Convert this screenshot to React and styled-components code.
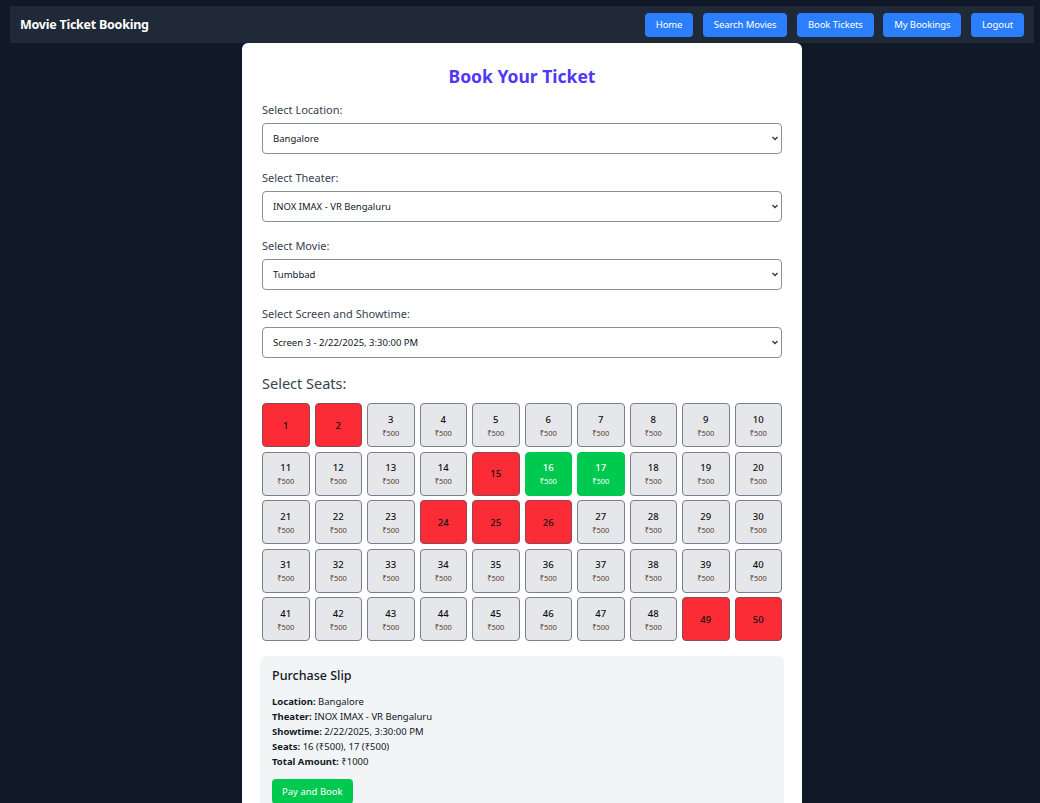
import React, { useState } from "react";
import styled, { createGlobalStyle } from "styled-components";

const GlobalStyle = createGlobalStyle`
  * { box-sizing: border-box; }
  body {
    margin: 0;
    background-color: #111827;
    font-family: "Noto Sans", "Open Sans", Arial, sans-serif;
  }
`;

// 페이지 전체
const Page = styled.div`
  min-height: 100vh;
  padding: 6px 6px 0 10px;
`;

// 상단 네비게이션
const Navbar = styled.nav`
  display: flex;
  justify-content: space-between;
  align-items: center;
  height: 37px;
  padding: 0 10px;
  background-color: #1f2937;
`;

const Brand = styled.div`
  color: white;
  font-weight: 700;
  font-size: 12.5px;
  letter-spacing: -0.25px;
`;

const NavLinks = styled.div`
  display: flex;
  gap: 9.5px;
`;

const NavButton = styled.button`
  height: 24px;
  padding: 0 11px;
  border: none;
  border-radius: 4px;
  background-color: #2b7fff;
  color: white;
  font-family: inherit;
  font-size: 9.5px;
  letter-spacing: -0.1px;
  cursor: pointer;
`;

// 예매 카드
const Card = styled.div`
  width: 560px;
  margin: 0 auto;
  padding: 19px 20px 24px;
  background-color: white;
  border-radius: 6px 6px 0 0;
`;

const Title = styled.h1`
  margin: 0 0 12px;
  text-align: center;
  font-size: 17.5px;
  line-height: 28px;
  font-weight: 700;
  color: #4f39f6;
`;

const Field = styled.div`
  margin-bottom: 16px;
`;

const Label = styled.label`
  display: block;
  margin-bottom: 5px;
  font-size: 11px;
  line-height: 16px;
  color: #374151;
`;

const SelectWrap = styled.div`
  position: relative;
`;

const Select = styled.select`
  display: block;
  width: 100%;
  height: 31px;
  padding: 0 6px 0 10px;
  border: 1px solid #8b8f96;
  border-radius: 4px;
  background-color: white;
  color: #111827;
  font-family: inherit;
  font-size: 9.5px;
  appearance: none;
  -webkit-appearance: none;
`;

// 선택 화살표 (select 위에 겹침)
const Chevron = styled.svg`
  position: absolute;
  right: 4px;
  top: 13px;
  width: 6px;
  height: 5px;
  pointer-events: none;
`;

const SectionTitle = styled.h2`
  margin: 15px 0 10px;
  font-size: 14.5px;
  line-height: 20px;
  font-weight: 400;
  color: #374151;
`;

const SeatGrid = styled.div`
  display: grid;
  grid-template-columns: repeat(10, 1fr);
  column-gap: 5px;
  row-gap: 4.5px;
`;

const seatColors = {
  booked: { bg: "#fb2c36", fg: "#111" },
  selected: { bg: "#00c950", fg: "white" },
  free: { bg: "#e5e7eb", fg: "#111" },
};

const Seat = styled.button`
  display: flex;
  flex-direction: column;
  align-items: center;
  justify-content: center;
  height: 44px;
  padding: 0;
  border: 1px solid ${(p) => (p.$status === "free" ? "#7b7f86" : p.$status === "booked" ? "#8a4a4e" : "#00c950")};
  border-radius: 4px;
  background-color: ${(p) => seatColors[p.$status].bg};
  color: ${(p) => seatColors[p.$status].fg};
  font-family: inherit;
  cursor: pointer;
`;

const SeatNo = styled.span`
  font-size: 9.5px;
  font-weight: 500;
  line-height: 13px;
`;

const SeatPrice = styled.span`
  margin-top: 2px;
  font-size: 7.5px;
  line-height: 10px;
  color: ${(p) => (p.$light ? "white" : "#5a3e2b")};
`;

// 구매 내역
const Slip = styled.div`
  margin: 15px -2px 0;
  padding: 12px 12px 14px;
  background-color: #f3f4f6;
  border-radius: 6px;
`;

const SlipTitle = styled.h3`
  margin: 0 0 10px;
  font-size: 12.5px;
  line-height: 16px;
  font-weight: 500;
  color: #111827;
`;

const SlipLine = styled.p`
  margin: 0;
  font-size: 9.5px;
  line-height: 15px;
  color: #111827;

  b { font-weight: 700; }
`;

const PayButton = styled.button`
  margin-top: 10px;
  height: 25px;
  padding: 0 10px;
  border: none;
  border-radius: 4px;
  background-color: #00c950;
  color: white;
  font-family: inherit;
  font-size: 9.5px;
  cursor: pointer;
`;

const booked = [1, 2, 15, 24, 25, 26, 49, 50];

function Dropdown({ value, children }) {
  return (
    <SelectWrap>
      <Select defaultValue={value}>{children}</Select>
      <Chevron viewBox="0 0 6 5">
        <path d="M0.5 1 L3 3.5 L5.5 1" fill="none" stroke="#333" strokeWidth="1.3" />
      </Chevron>
    </SelectWrap>
  );
}

export default function App() {
  const [selected, setSelected] = useState([16, 17]);

  function toggle(n) {
    if (booked.includes(n)) return;
    setSelected((s) => (s.includes(n) ? s.filter((x) => x !== n) : [...s, n]));
  }

  const seats = Array.from({ length: 50 }, (_, i) => i + 1);

  return (
    <>
      <GlobalStyle />
      <Page>
        <Navbar>
          <Brand>Movie Ticket Booking</Brand>
          <NavLinks>
            <NavButton>Home</NavButton>
            <NavButton>Search Movies</NavButton>
            <NavButton>Book Tickets</NavButton>
            <NavButton>My Bookings</NavButton>
            <NavButton>Logout</NavButton>
          </NavLinks>
        </Navbar>
        <Card>
          <Title>Book Your Ticket</Title>
          <Field>
            <Label>Select Location:</Label>
            <Dropdown value="Bangalore">
              <option>Bangalore</option>
            </Dropdown>
          </Field>
          <Field>
            <Label>Select Theater:</Label>
            <Dropdown value="INOX IMAX - VR Bengaluru">
              <option>INOX IMAX - VR Bengaluru</option>
            </Dropdown>
          </Field>
          <Field>
            <Label>Select Movie:</Label>
            <Dropdown value="Tumbbad">
              <option>Tumbbad</option>
            </Dropdown>
          </Field>
          <Field style={{ marginBottom: 0 }}>
            <Label>Select Screen and Showtime:</Label>
            <Dropdown value="s3">
              <option value="s3">Screen 3 - 2/22/2025, 3:30:00 PM</option>
            </Dropdown>
          </Field>

          <SectionTitle>Select Seats:</SectionTitle>
          <SeatGrid>
            {seats.map((n) => {
              const status = booked.includes(n) ? "booked" : selected.includes(n) ? "selected" : "free";
              return (
                <Seat key={n} $status={status} onClick={() => toggle(n)}>
                  <SeatNo>{n}</SeatNo>
                  {status !== "booked" && <SeatPrice $light={status === "selected"}>₹500</SeatPrice>}
                </Seat>
              );
            })}
          </SeatGrid>

          <Slip>
            <SlipTitle>Purchase Slip</SlipTitle>
            <SlipLine><b>Location:</b> Bangalore</SlipLine>
            <SlipLine><b>Theater:</b> INOX IMAX - VR Bengaluru</SlipLine>
            <SlipLine><b>Showtime:</b> 2/22/2025, 3:30:00 PM</SlipLine>
            <SlipLine>
              <b>Seats:</b> {selected.map((n) => `${n} (₹500)`).join(", ")}
            </SlipLine>
            <SlipLine><b>Total Amount:</b> ₹{selected.length * 500}</SlipLine>
            <PayButton>Pay and Book</PayButton>
          </Slip>
        </Card>
      </Page>
    </>
  );
}
